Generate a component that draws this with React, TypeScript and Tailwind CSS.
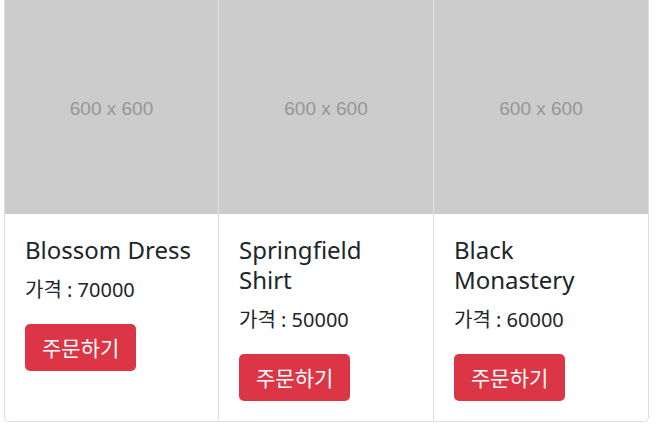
import React from 'react';

type Product = { title: string; price: number; width: string };

const products: Product[] = [
  { title: 'Blossom Dress', price: 70000, width: 'w-[213px]' },
  { title: 'Springfield Shirt', price: 50000, width: 'w-[215px] border-l border-[#dfdfdf]' },
  { title: 'Black Monastery', price: 60000, width: 'w-[215px] border-l border-[#dfdfdf]' },
];

const ProductCard: React.FC<{ product: Product }> = ({ product }) => (
  <div className={`flex flex-col ${product.width}`}>
    <div className="h-[214px] bg-[#cccccc] flex items-center justify-center pt-[4px]">
      <span className="text-[19px] text-[#969696] font-['Liberation_Sans',Arial,sans-serif]">600 x 600</span>
    </div>
    <div className="p-5 pt-[21px]">
      <h5 className="text-[24px] leading-[30px] mb-[10px] text-[#212529]">{product.title}</h5>
      <p className="text-[20px] leading-[30px] mb-[19px] text-[#212529]">가격 : {product.price}</p>
      <button className="bg-[#dc3545] text-white text-[21px] leading-[30px] px-[17px] h-[47px] rounded-[5px]">
        주문하기
      </button>
    </div>
  </div>
);

export default function App() {
  return (
    <div className="w-[658px] h-[428px] bg-white overflow-hidden font-['Noto_Sans','Noto_Sans_CJK_KR',sans-serif]">
      <div className="ml-[4px] w-[645px] flex border border-t-0 border-[#dfdfdf] rounded-b-[5px] overflow-hidden">
        {products.map(p => (
          <ProductCard key={p.title} product={p} />
        ))}
      </div>
    </div>
  );
}
